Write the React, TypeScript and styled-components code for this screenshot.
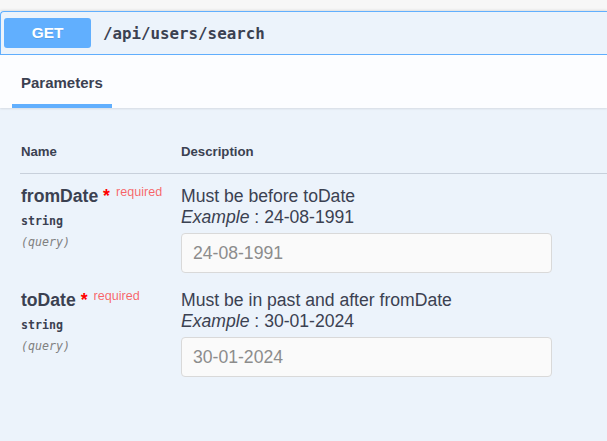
import React from "react";
import styled, { createGlobalStyle } from "styled-components";

const Global = createGlobalStyle`
  html, body { margin: 0; padding: 0; background: #f7f7f7; }
  body { font-family: "Liberation Sans", Arial, sans-serif; color: #3b4151; overflow: hidden; }
  * { box-sizing: border-box; }
`;

const Page = styled.div`
  padding-top: 11px;
  height: 441px;
`;

const OpBlock = styled.section`
  background: #ecf3fb;
  box-shadow: 0 0 3px rgba(0, 0, 0, 0.19);
  height: 430px;
`;

const Summary = styled.div`
  display: flex;
  align-items: center;
  height: 44px;
  padding-left: 3px;
  border-top: 1px solid #61affe;
  border-left: 1px solid #61affe;
  border-bottom: 1px solid #61affe;
  border-top-left-radius: 4px;
`;

const Method = styled.span`
  display: flex;
  align-items: center;
  justify-content: center;
  width: 87px;
  height: 30px;
  border-radius: 3px;
  background: #61affe;
  color: #fff;
  font-weight: 700;
  font-size: 15.4px;
  text-shadow: 0 1px 0 rgba(0, 0, 0, 0.1);
`;

const Path = styled.span`
  margin-left: 12px;
  font-family: "DejaVu Sans Mono", monospace;
  font-weight: 700;
  font-size: 15.8px;
  color: #3b4151;
`;

const TabHeader = styled.div`
  display: flex;
  height: 53px;
  padding-left: 12px;
  background: #fcfdff;
  box-shadow: 0 1px 2px rgba(0, 0, 0, 0.1);
`;

const Tab = styled.div<{ $active?: boolean }>`
  position: relative;
  display: flex;
  align-items: center;
  width: 100px;
  padding: 1px 9px 0;
  font-weight: 700;
  font-size: 15px;
  &::after {
    content: "";
    position: absolute;
    left: 0;
    right: 0;
    bottom: 0;
    height: 4px;
    background: ${(p) => (p.$active ? "#61affe" : "transparent")};
  }
`;

const Body = styled.div`
  padding: 36px 0 0 20px;
`;

const Grid = styled.div`
  display: grid;
  grid-template-columns: 160px 1fr;
`;

const HeadCell = styled.div`
  font-weight: 700;
  font-size: 13.2px;
  line-height: 16px;
  padding: 0 0 13px 1px;
  border-bottom: 1px solid #c8d0db;
`;

const NameCell = styled.div`
  padding: 12px 0 5px 1px;
`;

const DescCell = styled.div`
  padding: 12px 0 5px 1px;
`;

const ParamName = styled.div`
  font-weight: 700;
  font-size: 17.6px;
  line-height: 21px;
  white-space: nowrap;
`;

const Star = styled.span`
  color: #f00;
`;

const Required = styled.span`
  position: relative;
  top: -6px;
  padding-left: 6px;
  font-size: 12.6px;
  font-weight: 400;
  color: rgba(255, 0, 0, 0.6);
`;

const ParamType = styled.div`
  margin-top: 4px;
  font-family: "DejaVu Sans Mono", monospace;
  font-size: 11.6px;
  line-height: 16px;
  font-weight: 600;
`;

const ParamIn = styled.div`
  margin-top: 5px;
  font-family: "DejaVu Sans Mono", monospace;
  font-size: 11.6px;
  line-height: 16px;
  font-style: italic;
  color: #808080;
`;

const DescLine = styled.div`
  font-size: 17.6px;
  line-height: 21px;
`;

const Italic = styled.i``;

const Input = styled.input`
  display: block;
  margin-top: 5px;
  width: 371px;
  height: 40px;
  padding: 0 11px;
  border: 1px solid #d9d9d9;
  border-radius: 4px;
  background: #fafafa;
  font-family: "Liberation Sans", Arial, sans-serif;
  font-size: 17.6px;
  color: #3b4151;
  outline: none;
  &::placeholder { color: #8c8c8c; }
`;

const params = [
  { name: "fromDate", desc: "Must be before toDate", example: "24-08-1991" },
  { name: "toDate", desc: "Must be in past and after fromDate", example: "30-01-2024" },
];

export default function App() {
  return (
    <>
      <Global />
      <Page>
        <OpBlock>
          <Summary>
            <Method>GET</Method>
            <Path>/api/users/search</Path>
          </Summary>
          <TabHeader>
            <Tab $active>Parameters</Tab>
          </TabHeader>
          <Body>
            <Grid>
              <HeadCell>Name</HeadCell>
              <HeadCell>Description</HeadCell>
              {params.map((p) => (
                <React.Fragment key={p.name}>
                  <NameCell>
                    <ParamName>
                      {p.name}
                      <Star>&nbsp;*</Star>
                      <Required>required</Required>
                    </ParamName>
                    <ParamType>string</ParamType>
                    <ParamIn>(query)</ParamIn>
                  </NameCell>
                  <DescCell>
                    <DescLine>{p.desc}</DescLine>
                    <DescLine>
                      <Italic>Example</Italic> : {p.example}
                    </DescLine>
                    <Input placeholder={p.example} />
                  </DescCell>
                </React.Fragment>
              ))}
            </Grid>
          </Body>
        </OpBlock>
      </Page>
    </>
  );
}
